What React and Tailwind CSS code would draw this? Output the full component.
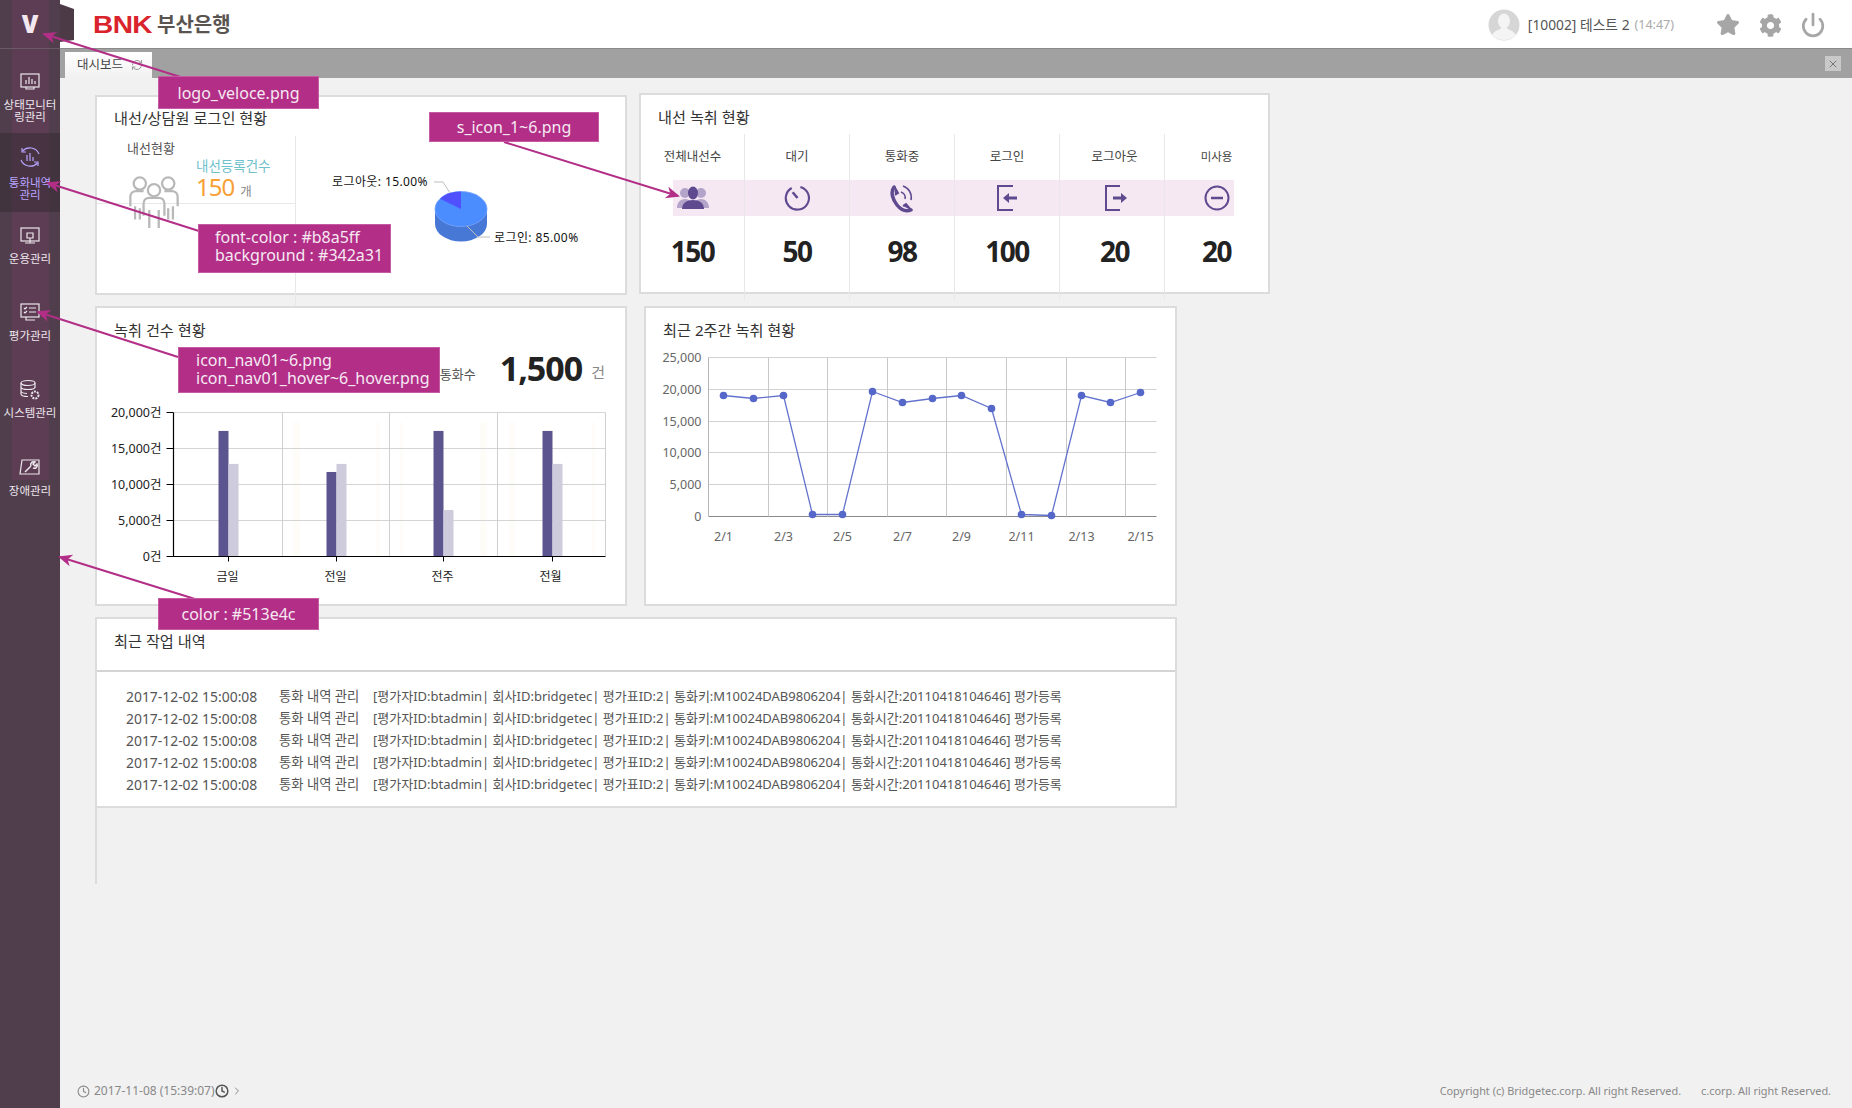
import React from "react";
import { Clock, ChevronRight, RefreshCw, X, Power, Star } from "lucide-react";
import { FaCog } from "react-icons/fa";

const NavIcon = ({ c, children }) => (
  <svg width="22" height="22" viewBox="0 0 22 22" fill="none" stroke={c} strokeWidth="1.2">{children}</svg>
);

const navItems = [
  { h: "h-[78px]", pt: "pt-[16px]", mt: "mt-[6px]", label: ["상태모니터", "링관리"], icon: (c) => (
    <NavIcon c={c}><rect x="2" y="3" width="18" height="13" /><path d="M7 13V9M10 13V6M13 13V8M16 13v-3M7 16v2h8v-2" /></NavIcon>) },
  { h: "h-[79px]", pt: "pt-[13px]", mt: "mt-[9px]", label: ["통화내역", "관리"], active: true, icon: (c) => (
    <NavIcon c={c}><path d="M3.500 5a10 10 0 0 1 16.500 3M18.500 17A10 10 0 0 1 2 14" /><path d="M3 2v4h4M19 20v-4h-4" /><path d="M8 15V9M11 15V7M14 15v-4" /></NavIcon>) },
  { h: "h-[77px]", pt: "pt-[13px]", mt: "mt-[6px]", label: ["운용관리"], icon: (c) => (
    <NavIcon c={c}><rect x="2" y="3" width="18" height="13" /><path d="M8 8h6v5H8zM11 13v5M6 18h10" /></NavIcon>) },
  { h: "h-[77px]", pt: "pt-[12px]", mt: "mt-[7px]", label: ["평가관리"], icon: (c) => (
    <NavIcon c={c}><rect x="2" y="3" width="18" height="13" /><path d="M5 7l1 1 2-2M5 11l1 1 2-2M10 7h7M10 11h7M7 16v3h9" /></NavIcon>) },
  { h: "h-[78px]", pt: "pt-[13px]", mt: "mt-[6px]", label: ["시스템관리"], icon: (c) => (
    <NavIcon c={c}><ellipse cx="9" cy="4" rx="7" ry="2.500" /><path d="M2 4v11c0 1.400 3 2.500 7 2.500M16 4v5M2 8c0 1.400 3 2.500 7 2.500s7-1 7-2.500M2 12c0 1.400 3 2.500 6 2.500" /><circle cx="16" cy="16" r="3.500" strokeWidth="2" strokeDasharray="2 1" /></NavIcon>) },
  { h: "h-[78px]", pt: "pt-[13px]", mt: "mt-[6px]", label: ["장애관리"], icon: (c) => (
    <NavIcon c={c}><path d="M3 3h17v14H1z" /><path d="M6 15l6-6M12 9a3 3 0 0 1 4-4l-2 2 2 2 2-2a3 3 0 0 1-4 4" strokeWidth="1.500" /></NavIcon>) },
];

const Title = ({ children }) => (
  <div className="pl-[17px] text-[15.200px] leading-[20px] text-[#333]">{children}</div>
);

const stats = [
  { h: "전체내선수", v: "150", icon: "users" },
  { h: "대기", v: "50", icon: "timer" },
  { h: "통화중", v: "98", icon: "phone" },
  { h: "로그인", v: "100", icon: "in" },
  { h: "로그아웃", v: "20", icon: "out", nudge: true },
  { h: "미사용", v: "20", icon: "minus", small: true },
];

const SIcon = ({ t }) => {
  const c = "#5f4a8f";
  if (t === "users")
    return (
      <svg width="32" height="28" viewBox="0 0 32 28">
        <g fill="#b5a4c9">
          <circle cx="8" cy="9" r="5" /><circle cx="24" cy="9" r="5" />
          <path d="M0 24c0-6 4-9 8-9s8 3 8 9zM16 24c0-6 4-9 8-9s8 3 8 9z" />
        </g>
        <ellipse cx="16" cy="9" rx="5" ry="6.500" fill={c} />
        <path d="M5 25c0-6 5-9 11-9s11 3 11 9z" fill={c} />
      </svg>
    );
  if (t === "timer")
    return (
      <svg width="27" height="28" viewBox="0 0 28 28" fill="none" stroke={c} strokeWidth="2.200">
        <path d="M17 2.500A12 12 0 1 1 8 3.600" /><path d="M9 8l5 6" strokeWidth="2.600" />
      </svg>
    );
  if (t === "phone")
    return (
      <svg width="26" height="30" viewBox="0 0 26 30" fill="none" stroke={c}>
        <path d="M5 4C1 9 4 17 8 22s9 7 14 5" strokeWidth="3.500" strokeLinecap="round" />
        <path d="M5 3l4 7-3 2M22 27l-5-6-3 2" fill={c} strokeWidth="2" />
        <path d="M12 9a6 6 0 0 1 4 7M14 3a12 12 0 0 1 8 14" strokeWidth="1.600" />
      </svg>
    );
  if (t === "in")
    return (
      <svg width="24" height="28" viewBox="0 0 24 28" fill="none" stroke={c} strokeWidth="2">
        <path d="M18 2H3v24h15" /><path d="M22 14h-9" strokeWidth="3" /><path d="M8 14l6-5v10z" fill={c} stroke="none" />
      </svg>
    );
  if (t === "out")
    return (
      <svg width="24" height="28" viewBox="0 0 24 28" fill="none" stroke={c} strokeWidth="2">
        <path d="M17 2H3v24h14" /><path d="M10 14h9" strokeWidth="3" /><path d="M24 14l-6-5v10z" fill={c} stroke="none" />
      </svg>
    );
  return (
    <svg width="26" height="26" viewBox="0 0 26 26" fill="none" stroke={c} strokeWidth="2">
      <circle cx="13" cy="13" r="11.500" /><path d="M7 13h12" strokeWidth="2.500" />
    </svg>
  );
};

const gx1 = [282, 389, 497];
const strips = [[293, 6], [376, 3], [400, 2], [480, 6], [509, 5], [592, 2]];
const bars = [
  { x: 218, a: 0.872, b: 0.643, l: "금일", lx: 227 },
  { x: 326, a: 0.587, b: 0.643, l: "전일", lx: 335 },
  { x: 433, a: 0.872, b: 0.3225, l: "전주", lx: 442 },
  { x: 542, a: 0.872, b: 0.643, l: "전월", lx: 550 },
];
const BarChart = () => (
  <svg width="528" height="213" viewBox="96.5 391.5 528 213" className="block shrink-0">
    {strips.map(([x, w]) => <rect key={x} x={x} y={422} width={w} height={134} fill="#fdfcf7" />)}
    {[412, 448, 484, 520].map((y) => <line key={y} x1="173" x2="605" y1={y} y2={y} stroke="#d5d5d5" />)}
    {[...gx1, 605].map((x) => <line key={x} x1={x} x2={x} y1="412" y2="556" stroke="#cfcfcf" />)}
    {bars.map((b) => (
      <g key={b.x}>
        <rect x={b.x} y={556 - 144 * b.a} width="10" height={144 * b.a} fill="#5c548e" />
        <rect x={b.x + 10} y={556 - 144 * b.b} width="10" height={144 * b.b} fill="#cecbdc" />
        <line x1={b.x + 10} x2={b.x + 10} y1="556" y2="561" stroke="#000" />
        <text x={b.lx} y="580" textAnchor="middle" fontSize="12" fill="#222">{b.l}</text>
      </g>
    ))}
    <path d="M173 412V556H605" fill="none" stroke="#000" strokeWidth="1.200" />
    {["20,000건", "15,000건", "10,000건", "5,000건", "0건"].map((t, i) => (
      <g key={t}>
        <line x1="166" x2="173" y1={412 + 36 * i} y2={412 + 36 * i} stroke="#000" />
        <text x="161" y={416 + 36 * i} textAnchor="end" fontSize="12.500" fill="#222">{t}</text>
      </g>
    ))}
  </svg>
);

const gy = [357, 389, 421, 452, 484, 516];
const gx = [768, 827, 887, 946, 1006, 1066, 1125];
const px = [723, 753, 783, 812, 842, 872, 902, 932, 961, 991, 1021, 1051, 1081, 1110, 1140];
const py = [395, 398, 395, 514, 514, 391, 402, 398, 395, 408, 514, 515, 395, 402, 392];
const LineChart = () => (
  <svg width="529" height="254" viewBox="645.5 349.5 529 254" className="block shrink-0">
    {gy.map((y, i) => (
      <g key={y}>
        <line x1="708" x2="1156" y1={y} y2={y} stroke={i === 5 ? "#8a8a8a" : "#d2d2d2"} />
        <text x="701" y={y + 4.500} textAnchor="end" fontSize="12.500" fill="#666">{["25,000", "20,000", "15,000", "10,000", "5,000", "0"][i]}</text>
      </g>
    ))}
    <line x1="708" x2="708" y1="357" y2="516" stroke="#b5b5b5" />
    {gx.map((x) => <line key={x} x1={x} x2={x} y1="357" y2="516" stroke="#c9c9c9" />)}
    <polyline points={px.map((x, i) => `${x},${py[i]}`).join(" ")} fill="none" stroke="#6373cd" strokeWidth="1.300" />
    {px.map((x, i) => <circle key={x} cx={x} cy={py[i]} r="3.800" fill="#5567c9" />)}
    {px.map((x, i) => i % 2 === 0 && (
      <text key={x} x={x} y="540" textAnchor="middle" fontSize="12.500" fill="#666">{`2/${i + 1}`}</text>
    ))}
  </svg>
);

const Pie = () => (
  <svg width="329" height="157" viewBox="296 136 329 157" className="block shrink-0">
    <path d="M435 209v15a26 17.500 0 0 0 52 0v-15z" fill="#4878d6" />
    <ellipse cx="461" cy="209" rx="26" ry="17.500" fill="#4b8cff" stroke="#78a5ff" strokeWidth="0.800" />
    <path d="M461 209V191.500A26 17.500 0 0 0 440 198.700Z" fill="#5050ff" />
    <path d="M434 182h9l7 11M490 237h-12l-11-11" fill="none" stroke="#bdbdbd" />
    <text x="428" y="186" textAnchor="end" fontSize="12" letterSpacing="0.400" fill="#111">로그아웃: 15.00%</text>
    <text x="494" y="241.500" fontSize="12" letterSpacing="0.400" fill="#111">로그인: 85.00%</text>
  </svg>
);

const PeopleIcon = () => (
  <svg width="50" height="53" viewBox="0 0 52 56" fill="none" stroke="#b8b8b8" strokeWidth="2.400">
    <circle cx="11" cy="8" r="6.500" /><circle cx="41" cy="8" r="6.500" /><circle cx="26" cy="15" r="6.500" />
    <path d="M1 32V22c0-4 3-6 6-6h8M51 32V22c0-4-3-6-6-6h-8M15 42V29c0-4 3-6 6-6h10c3 0 6 2 6 6v13M6 32v14M11 34v12M41 34v12M46 32v14M21 36v19M31 36v19" />
  </svg>
);

const Annot = ({ className, children }) => (
  <div className={`absolute z-30 bg-[#b22e87] text-[#f6e9f2] text-[16px] leading-[18px] border border-[#c65aa3] ${className}`}>{children}</div>
);

const rows = [0, 1, 2, 3, 4];
const msg = "[평가자ID:btadmin| 회사ID:bridgetec| 평가표ID:2| 통화키:M10024DAB9806204| 통화시간:20110418104646] 평가등록";

export default function App() {
  return (
    <div className="relative flex w-full h-screen min-h-[1108px] overflow-hidden bg-[#f1f1f1] font-['Noto_Sans','Noto_Sans_CJK_KR',sans-serif]">
      <aside className="relative w-[60px] shrink-0 bg-[#513e4c]">
        <div className="absolute left-[12px] top-0 w-[37px] h-[480px] bg-[#6a3c5c]/50" />
        <div className="relative h-[49px] flex items-center justify-center border-b border-[#6a5a65] text-[#f3e8f0] text-[24px] font-black">
          V
          <svg className="absolute left-[60px] top-[4px] z-10" width="14" height="38" viewBox="0 0 14 38"><path d="M0 0l14 5v31l-14 2z" fill="#4c3b47" /></svg>
        </div>
        <div className="mt-[6px]">
          {navItems.map((n) => {
            const c = n.active ? "#b8a5ff" : "#ece7ec";
            return (
              <div key={n.label[0]} className={`relative ${n.h} ${n.pt} flex flex-col items-center ${n.active ? "bg-[#342a31]/50" : ""}`}>
                {n.icon(c)}
                <div className={`${n.mt} text-center text-[11.500px] leading-[12px] whitespace-nowrap ${n.active ? "text-[#b8a5ff]" : "text-[#ece7ec]"}`}>
                  {n.label.map((l) => <div key={l}>{l}</div>)}
                </div>
              </div>
            );
          })}
        </div>
      </aside>

      <main className="flex-1 flex flex-col min-w-0">
        <header className="h-[49px] shrink-0 bg-white border-b border-[#8a8a8a] flex items-center pt-[2px]">
          <div className="ml-[33px] flex items-center">
            <span className="text-[#d9232d] text-[23px] leading-none font-bold tracking-[-0.5px] font-['Liberation_Sans',sans-serif] scale-x-[1.220] origin-left w-[64px]">BNK</span>
            <span className="text-[#5a5450] text-[20px] font-bold leading-none">부산은행</span>
          </div>
          <div className="ml-auto flex items-center pr-[26px]">
            <svg width="32" height="32" viewBox="0 0 32 32">
              <circle cx="16" cy="16" r="15.500" fill="#d6d6d6" />
              <ellipse cx="16" cy="12" rx="6" ry="7.500" fill="#f4f4f4" />
              <path d="M4 26c3-5 8-5 9-7h6c1 2 6 2 9 7-3 3.500-7 5-12 5s-9-1.500-12-5z" fill="#f4f4f4" />
            </svg>
            <span className="ml-[8px] text-[13.800px] text-[#555]">[10002] 테스트 2</span>
            <span className="ml-[5px] text-[12.500px] text-[#aaa]">(14:47)</span>
            <Star className="ml-[42px]" size={24} color="#a6a6a6" fill="#a6a6a6" />
            <FaCog className="ml-[19px]" size={23} color="#a6a6a6" />
            <Power className="ml-[18px]" size={26} color="#a6a6a6" strokeWidth={2.500} />
          </div>
        </header>

        <div className="h-[29px] shrink-0 bg-[#a1a1a1] flex items-end justify-between pl-[5px] pr-[11px]">
          <div className="w-[87px] h-[26px] bg-gradient-to-b from-white to-[#f1f1f1] flex items-center pl-[12px] text-[12.500px] text-[#444]">
            대시보드
            <RefreshCw className="ml-[8px]" size={12} color="#999" />
          </div>
          <div className="mb-[7px] w-[16px] h-[15px] bg-[#c9c9c9] flex items-center justify-center">
            <X size={12} color="#777" strokeWidth={2} />
          </div>
        </div>

        <div className="flex-1 flex flex-col pl-[35px] min-h-0">
          <div className="flex items-start pt-[17px]">
            <section className="w-[532px] h-[200px] bg-white border-2 border-[#dcdcdc]">
              <div className="pt-[11px] h-[39px]"><Title>내선/상담원 로그인 현황</Title></div>
              <div className="flex">
                <div className="relative w-[199px] h-[170px] border-r border-[#e8e8e8] shrink-0">
                  <div className="h-[68px] border-b border-[#e8e8e8] pt-[3px]">
                    <div className="pl-[30px] text-[13px] leading-[18px] text-[#555]">내선현황</div>
                    <div className="pl-[99px] text-[13.500px] leading-[18px] text-[#6fc1cc]">내선등록건수</div>
                    <div className="pl-[99px] flex items-baseline leading-[24px]">
                      <span className="text-[24px] text-[#f79f33] tracking-[-1px]">150</span>
                      <span className="ml-[6px] text-[12.500px] text-[#888]">개</span>
                    </div>
                  </div>
                  <div className="absolute left-[32px] top-[40px]"><PeopleIcon /></div>
                </div>
                <Pie />
              </div>
            </section>

            <section className="ml-[12px] -mt-[2px] w-[631px] h-[201px] bg-white border-2 border-[#dcdcdc]">
              <div className="pt-[12px] h-[39px]"><Title>내선 녹취 현황</Title></div>
              <div className="grid grid-cols-[104px_105px_105px_105px_105px_103px] h-[166px]">
                {stats.map((s, i) => (
                  <div key={s.h} className={`flex flex-col items-stretch ${i < 5 ? "border-r border-[#e8e8e8]" : ""}`}>
                    <div className={`h-[46px] flex items-center justify-center text-[#444] ${s.small ? "text-[11.500px]" : "text-[12.500px]"} ${s.nudge ? "pl-[5px]" : ""}`}>{s.h}</div>
                    <div className={`h-[36px] bg-[#f5e8f3] flex items-center justify-center ${i === 0 ? "ml-[32px] pr-[32px]" : ""} ${i === 5 ? "mr-[34px] pl-[34px]" : ""} ${s.nudge ? "pl-[5px]" : ""}`}>
                      <SIcon t={s.icon} />
                    </div>
                    <div className={`h-[70px] flex items-center justify-center text-[28px] font-bold text-[#222] tracking-[-1.500px] ${s.nudge ? "pl-[5px]" : ""}`}>{s.v}</div>
                  </div>
                ))}
              </div>
            </section>
          </div>

          <div className="flex items-start mt-[11px]">
            <section className="w-[532px] h-[300px] bg-white border-2 border-[#dcdcdc] overflow-hidden">
              <div className="pt-[12px] h-[42px]"><Title>녹취 건수 현황</Title></div>
              <div className="h-[42px] flex items-center justify-end pr-[20px]">
                <span className="text-[13px] text-[#555] mt-[8px]">통화수</span>
                <span className="ml-[24px] text-[34px] font-bold text-[#222] tracking-[-1px] leading-none mb-[7px]">1,500</span>
                <span className="ml-[9px] text-[15px] text-[#888] mt-[3px]">건</span>
              </div>
              <BarChart />
            </section>
            <section className="ml-[17px] w-[533px] h-[300px] bg-white border-2 border-[#dcdcdc] overflow-hidden">
              <div className="pt-[12px] h-[42px]"><Title>최근 2주간 녹취 현황</Title></div>
              <LineChart />
            </section>
          </div>

          <div className="mt-[11px] h-[267px] border-l-2 border-[#dcdcdc] shrink-0">
            <section className="w-[1080px] h-[191px] bg-white border-y-2 border-r-2 border-[#dcdcdc]">
              <div className="h-[53px] pt-[12px] border-b-2 border-[#d5d5d5]"><Title>최근 작업 내역</Title></div>
              <div className="pt-[14px] pl-[29px] text-[13px] text-[#555]">
                {rows.map((r) => (
                  <div key={r} className="flex h-[22px] items-center whitespace-nowrap">
                    <span className="w-[153px] text-[13.900px]">2017-12-02 15:00:08</span>
                    <span className="w-[94px] text-[13.300px]">통화 내역 관리</span>
                    <span>{msg}</span>
                  </div>
                ))}
              </div>
            </section>
          </div>

          <footer className="mt-auto -ml-[18px] h-[34px] shrink-0 flex items-center justify-between pr-[21px] text-[#888]">
            <div className="flex items-center text-[12px]">
              <Clock size={13} color="#888" />
              <span className="ml-[4px]">2017-11-08 (15:39:07)</span>
              <Clock size={14} color="#555" strokeWidth={2.500} />
              <ChevronRight className="ml-[2px]" size={12} color="#888" />
            </div>
            <div className="flex text-[10.900px]">
              <span>Copyright (c) Bridgetec.corp. All right Reserved.</span>
              <span className="ml-[20px]">c.corp. All right Reserved.</span>
            </div>
          </footer>
        </div>
      </main>

      <svg className="absolute inset-0 z-20 pointer-events-none" width="1852" height="1108" viewBox="0 0 1852 1108" fill="none" stroke="#b22e87" strokeWidth="2">
        <defs>
          <marker id="arr" markerWidth="7" markerHeight="7" refX="6" refY="3" orient="auto"><path d="M0 0L7 3L0 6L2 3z" fill="#b22e87" stroke="none" /></marker>
        </defs>
        <line x1="190" y1="80" x2="44" y2="34" markerEnd="url(#arr)" />
        <line x1="199" y1="231" x2="48" y2="183" markerEnd="url(#arr)" />
        <line x1="504" y1="142" x2="678" y2="196" markerEnd="url(#arr)" />
        <line x1="178" y1="357" x2="38" y2="312" markerEnd="url(#arr)" />
        <line x1="195" y1="599" x2="60" y2="557" markerEnd="url(#arr)" />
      </svg>

      <Annot className="left-[158px] top-[76px] w-[161px] h-[33px] flex items-center justify-center">logo_veloce.png</Annot>
      <Annot className="left-[429px] top-[112px] w-[170px] h-[30px] flex items-center justify-center">s_icon_1~6.png</Annot>
      <Annot className="left-[198px] top-[224px] w-[193px] h-[49px] pl-[16px] pt-[3px]"><div>font-color : #b8a5ff</div><div>background : #342a31</div></Annot>
      <Annot className="left-[178px] top-[347px] w-[262px] h-[46px] pl-[17px] pt-[3px]"><div>icon_nav01~6.png</div><div>icon_nav01_hover~6_hover.png</div></Annot>
      <Annot className="left-[158px] top-[598px] w-[161px] h-[32px] flex items-center justify-center">color : #513e4c</Annot>
    </div>
  );
}
